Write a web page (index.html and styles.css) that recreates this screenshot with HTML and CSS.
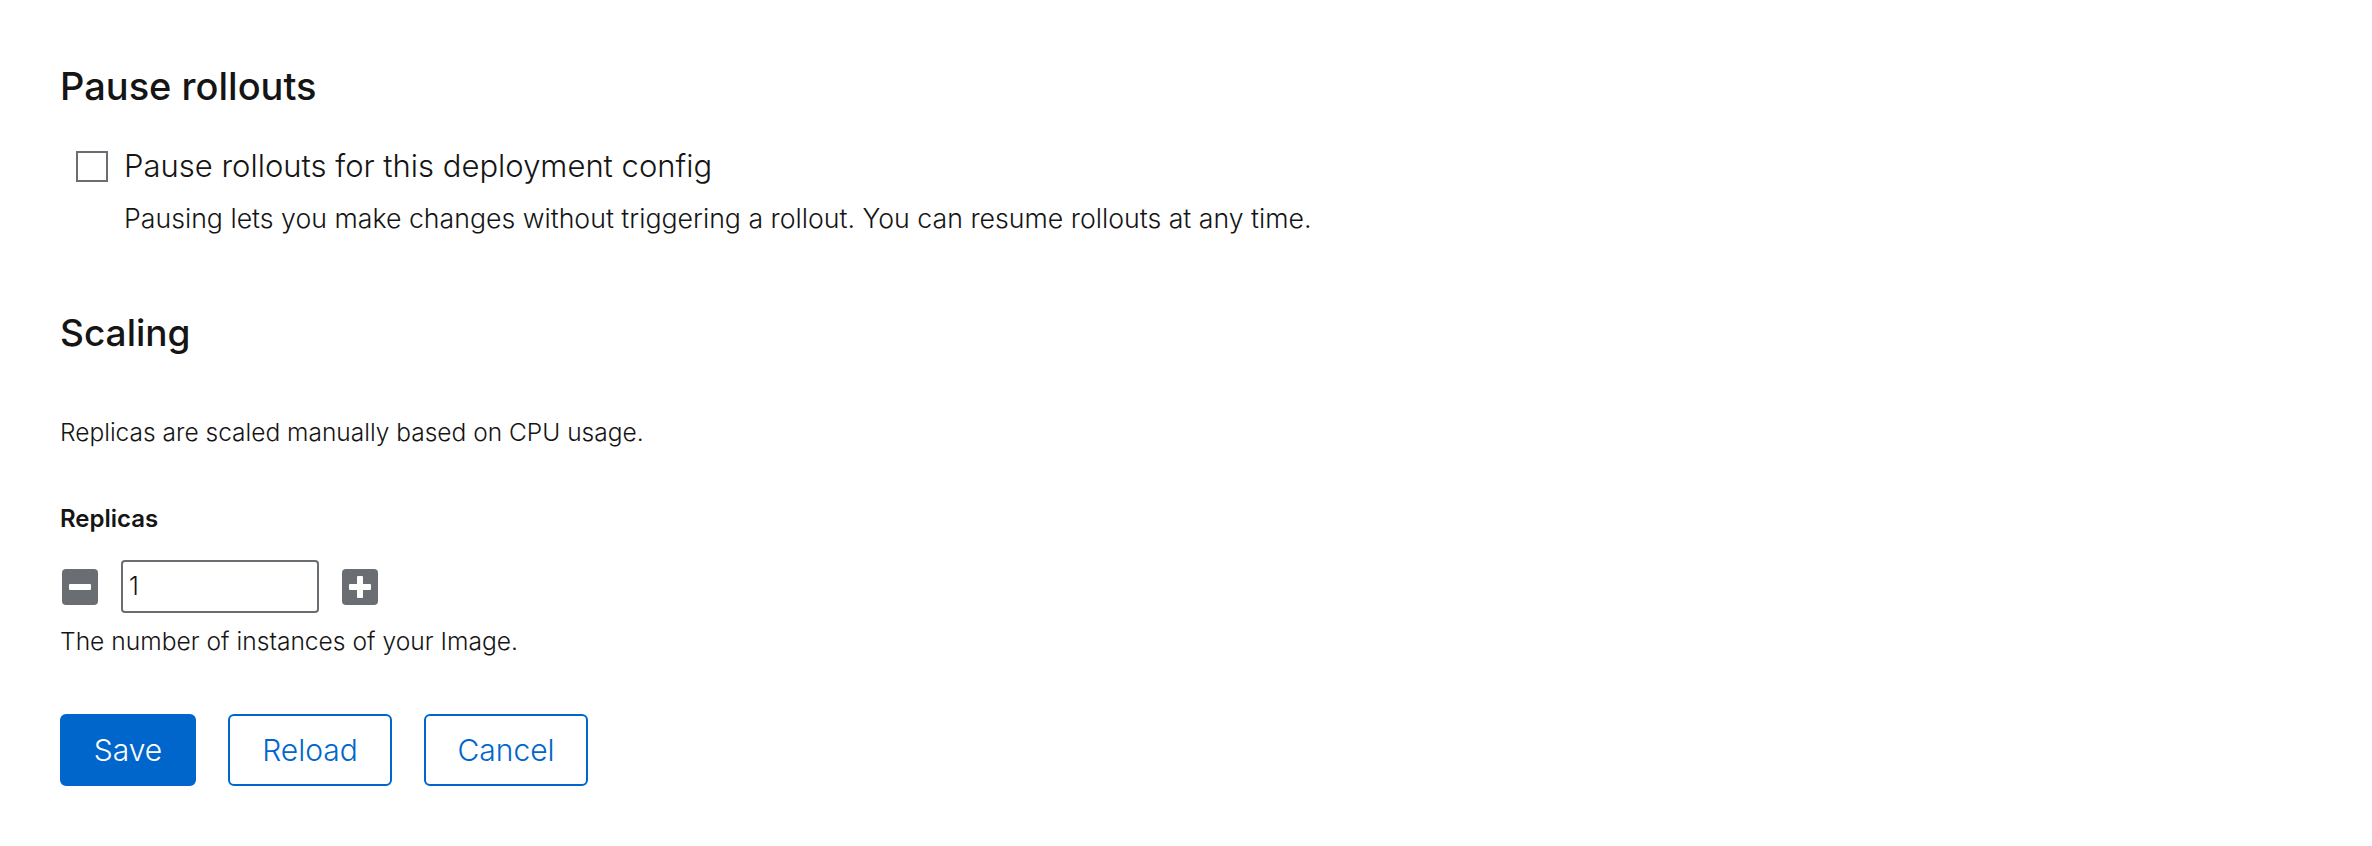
FILE: index.html
```html
<!DOCTYPE html>
<html lang="en">
<head>
<meta charset="utf-8">
<title>Deployment config</title>
<link rel="stylesheet" href="styles.css">
</head>
<body>
<main class="page">
  <section class="section">
    <h2 class="title">Pause rollouts</h2>
    <div class="check-row">
      <span class="checkbox"></span>
      <label class="check-label">Pause rollouts for this deployment config</label>
    </div>
    <p class="check-desc">Pausing lets you make changes without triggering a rollout. You can resume rollouts at any time.</p>
  </section>
  <section class="section">
    <h2 class="title title-scaling">Scaling</h2>
    <p class="intro">Replicas are scaled manually based on CPU usage.</p>
    <div class="field-label">Replicas</div>
    <div class="number-row">
      <button class="icon-btn" aria-label="Decrement">
        <svg viewBox="0 0 36 36" width="36" height="36"><rect x="0" y="0" width="36" height="36" rx="4" fill="#6a6e73"/><rect x="7" y="15" width="22" height="6" rx="1" fill="#fff"/></svg>
      </button>
      <div class="num-input">1</div>
      <button class="icon-btn" aria-label="Increment">
        <svg viewBox="0 0 36 36" width="36" height="36"><rect x="0" y="0" width="36" height="36" rx="4" fill="#6a6e73"/><rect x="7" y="15" width="22" height="6" rx="1" fill="#fff"/><rect x="15" y="7" width="6" height="22" rx="1" fill="#fff"/></svg>
      </button>
    </div>
    <p class="help">The number of instances of your Image.</p>
  </section>
  <div class="actions">
    <button class="btn btn-primary">Save</button>
    <button class="btn btn-secondary">Reload</button>
    <button class="btn btn-secondary">Cancel</button>
  </div>
</main>
</body>
</html>
```

FILE: styles.css
```css
* { box-sizing: border-box; }
html, body { margin: 0; padding: 0; background: #fff; }
body {
  font-family: "Inter", "Liberation Sans", sans-serif;
  color: #151515;
}
.page {
  padding: 60px 60px 0 60px;
}
.section { margin: 0; }
.title {
  margin: 0;
  font-size: 38px;
  line-height: 52px;
  font-weight: 500;
}
.title-scaling {
  margin-top: 69px;
  font-size: 37px;
}
.check-row {
  margin-top: 30px;
  display: flex;
  align-items: center;
  height: 48px;
  padding-left: 16px;
}
.checkbox {
  width: 32px;
  height: 31px;
  border: 2px solid #6a6e73;
  margin-right: 16px;
  flex: none;
}
.check-label {
  font-size: 31px;
  line-height: 48px;
  font-weight: 300;
}
.check-desc {
  margin: 8px 0 0 64px;
  font-size: 26.7px;
  line-height: 40px;
  font-weight: 300;
}
.intro {
  margin: 53px 0 0 0;
  font-size: 24.5px;
  line-height: 40px;
  font-weight: 300;
}
.field-label {
  margin-top: 47px;
  font-size: 24px;
  line-height: 40px;
  font-weight: 600;
}
.number-row {
  margin-top: 21px;
  display: flex;
  align-items: center;
  height: 53px;
  padding-left: 2px;
}
.icon-btn {
  border: 0;
  background: none;
  padding: 0;
  margin: 0;
  width: 36px;
  height: 36px;
  display: block;
}
.icon-btn svg { display: block; }
.num-input {
  margin: 0 23px;
  width: 198px;
  height: 53px;
  border: 2px solid #6a6e73;
  border-radius: 4px;
  padding-left: 6px;
  font-size: 25px;
  line-height: 49px;
  font-weight: 300;
}
.help {
  margin: 8px 0 0 0;
  font-size: 24.6px;
  line-height: 40px;
  font-weight: 300;
}
.actions {
  margin-top: 53px;
  display: flex;
  gap: 32px;
}
.btn {
  height: 72px;
  padding: 0;
  font-family: "Inter", "Liberation Sans", sans-serif;
  font-size: 30px;
  font-weight: 300;
  border-radius: 6px;
  cursor: pointer;
}
.btn-primary {
  background: #0066cc;
  color: #fff;
  border: 2px solid #0066cc;
  width: 136px;
}
.btn-secondary {
  background: #fff;
  color: #0066cc;
  border: 2px solid #0066cc;
  width: 164px;
}
```
